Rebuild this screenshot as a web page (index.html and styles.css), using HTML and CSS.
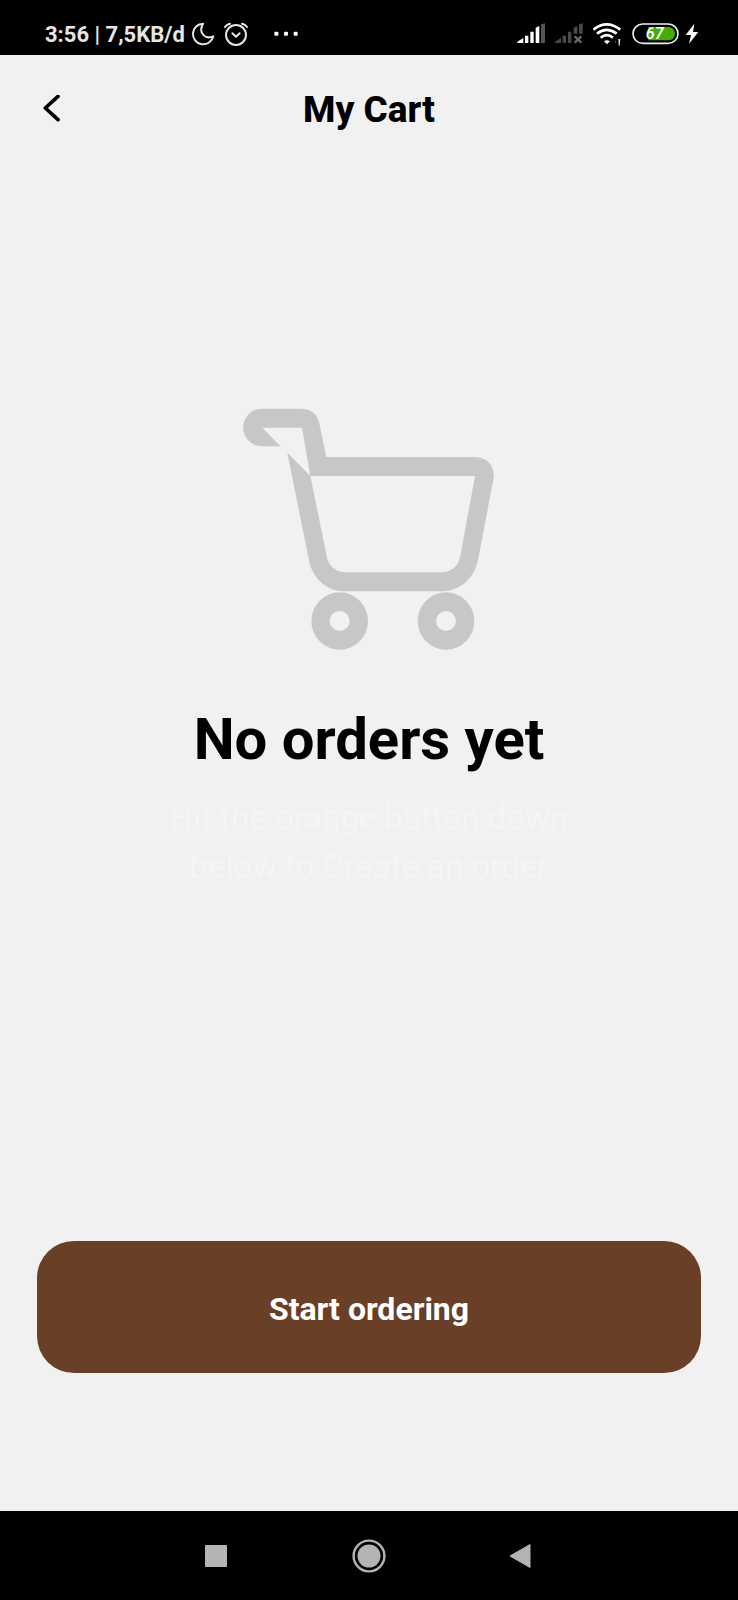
FILE: index.html
```html
<!DOCTYPE html>
<html lang="en">
<head>
  <meta charset="utf-8">
  <meta name="viewport" content="width=device-width, initial-scale=1">
  <title>My Cart</title>
  <link rel="stylesheet" href="styles.css">
</head>
<body>
  <div class="screen">
    <div class="status-bar">
      <div class="status-group status-left">
        <span class="status-text">3:56 | 7,5KB/d</span>
        <svg class="icon" width="24" height="28" viewBox="570 60 72 84" aria-hidden="true">
          <path d="M606 71A31 31 0 1 0 637 109C614 119 590 100 606 71Z" fill="none" stroke="#e6e6e6" stroke-width="6" stroke-linejoin="round"/>
        </svg>
        <svg class="icon alarm" width="26" height="28" viewBox="668 60 78 84" aria-hidden="true">
          <g fill="none" stroke="#e6e6e6" stroke-width="6" stroke-linecap="round" stroke-linejoin="round">
            <circle cx="707" cy="105" r="30"/>
            <path d="M696 100L707 110L718 100M674 81Q679 73 689 71M740 81Q735 73 725 71"/>
          </g>
        </svg>
        <svg class="icon more" width="26" height="28" viewBox="818 60 78 84" aria-hidden="true">
          <g fill="#fff">
            <rect x="822" y="95" width="12" height="12" rx="3"/>
            <rect x="851" y="95" width="12" height="12" rx="3"/>
            <rect x="880" y="95" width="12" height="12" rx="3"/>
          </g>
        </svg>
      </div>
      <div class="status-group status-right">
        <svg class="icon" width="30" height="28" viewBox="50 60 90 84" aria-hidden="true">
          <path d="M51 129V125L69 114V129ZM74 107H84V129H74ZM90 95H100V129H90ZM106 83L117 78V129H106Z" fill="#fff"/>
          <path d="M122 73L134 70V129H122Z" fill="#555"/>
        </svg>
        <svg class="icon" width="30" height="28" viewBox="162 60 90 84" aria-hidden="true">
          <path d="M162 129V125L180 114V129ZM185 107H195V129H185ZM201 95H211V129H201ZM218 83L229 78V101H218ZM234 73L245 70V101H234Z" fill="#484848"/>
          <path d="M221 109L241 128M241 109L221 128" stroke="#686868" stroke-width="7"/>
        </svg>
        <svg class="icon" width="30" height="28" viewBox="279 60 90 84" aria-hidden="true">
          <g fill="none" stroke="#fff" stroke-width="8">
            <path d="M280 89Q320 57 361 89M291 101Q320 78 350 101M302 113Q320 98 339 113"/>
          </g>
          <path d="M312 124Q320 117 330 124L321 133Z" fill="#fff"/>
          <path d="M345 129V119L350 129Z" fill="#555"/>
          <path d="M355 117H361L359 137H356Z" fill="#ddd"/>
        </svg>
        <div class="battery">
          <svg class="icon" width="49" height="28" viewBox="393 60 147 84" role="img" aria-label="Battery 67 percent">
            <rect x="399" y="72" width="135" height="58" rx="29" fill="#000" stroke="#eee" stroke-width="5"/>
            <path d="M445 81H505A20 20 0 0 1 505 121H445Z" fill="#44ad0b"/>
            <text class="battery-level" x="464" y="118" text-anchor="middle">67</text>
          </svg>
          <svg class="icon" width="14" height="28" viewBox="555 60 42 84" aria-hidden="true">
            <path d="M583 71L557 105H573L567 131L595 96H579Z" fill="#fff"/>
          </svg>
        </div>
      </div>
    </div>

    <header class="app-header">
      <button class="back" type="button" aria-label="Back">
        <svg class="icon" width="20" height="30" viewBox="0 0 60 90" aria-hidden="true">
          <path d="M48 4L10 39L48 74" fill="none" stroke="#000" stroke-width="11" stroke-linecap="round" stroke-linejoin="round"/>
        </svg>
      </button>
      <h1 class="title">My Cart</h1>
    </header>

    <main class="content">
      <section class="empty">
        <svg class="icon" width="252" height="242" viewBox="38 35 756 726" aria-hidden="true">
          <g fill="#c7c7c7">
            <path d="M150 150H95A56.500 56.500 0 0 1 95 37H216Q262 40 269 91L288 182H738Q788 188 791 239L743 492C731 546 690 584 638 585H335C284 581 246 544 236 492L171 169L240 239L291 489Q302 524 341 528H638Q677 524 688 489L734 239H240L215 94H96Z"/>
            <path fill-rule="evenodd" d="M328 588A85 86 0 1 1 328 760A85 86 0 1 1 328 588ZM328 644A30 30 0 1 0 328 704A30 30 0 1 0 328 644Z"/>
            <path fill-rule="evenodd" d="M647 588A85 86 0 1 1 647 760A85 86 0 1 1 647 588ZM647 644A30 30 0 1 0 647 704A30 30 0 1 0 647 644Z"/>
          </g>
        </svg>
        <h2 class="empty-title">No orders yet</h2>
        <p class="empty-text">Hit the orange button down<br>below to Create an order</p>
      </section>
      <button class="primary" type="button">Start ordering</button>
    </main>

    <nav class="system-nav" aria-label="System navigation">
      <button class="nav-button" type="button" aria-label="Recent apps">
        <svg class="icon" width="34" height="34" viewBox="0 0 34 34"><rect x="6" y="6" width="22" height="22" rx="1" fill="#b4b4b4"/></svg>
      </button>
      <button class="nav-button" type="button" aria-label="Home">
        <svg class="icon" width="34" height="34" viewBox="0 0 34 34"><circle cx="17" cy="17" r="15.4" fill="none" stroke="#b4b4b4" stroke-width="2.4"/><circle cx="17" cy="17" r="11.5" fill="#b4b4b4"/></svg>
      </button>
      <button class="nav-button" type="button" aria-label="Back">
        <svg class="icon" width="34" height="34" viewBox="0 0 34 34"><path d="M5 17L25 5.500V28.500Z" fill="#b4b4b4" stroke="#b4b4b4" stroke-width="1" stroke-linejoin="round"/></svg>
      </button>
    </nav>
  </div>
</body>
</html>
```
FILE: styles.css
```css
* {
  box-sizing: border-box;
}

body {
  margin: 0;
  background: #f1f1f1;
  color: #000;
  font-family: Roboto, "Liberation Sans", sans-serif;
}

h1,
h2,
p {
  margin: 0;
}

button {
  padding: 0;
  border: 0;
  background: none;
  font: inherit;
  cursor: pointer;
}

.icon {
  display: block;
  flex: none;
}

.screen {
  display: flex;
  flex-direction: column;
  min-height: 100vh;
}

.status-bar {
  display: flex;
  justify-content: space-between;
  padding: 20px 39px 5px 45px;
  background: #000;
  color: #e6e6e6;
}

.status-group {
  display: flex;
  align-items: flex-start;
}

.status-left {
  gap: 6px;
}

.status-right {
  gap: 8px;
}

.status-text {
  font-size: 22px;
  font-weight: 700;
  line-height: 30px;
  white-space: nowrap;
}

.alarm {
  margin-left: 2px;
}

.more {
  margin-left: 18px;
}

.battery {
  display: flex;
  gap: 5px;
}

.battery-level {
  fill: #fff;
  font-size: 48px;
  font-style: italic;
  font-weight: 500;
}

.app-header {
  display: grid;
  grid-template-columns: 1fr auto 1fr;
  align-items: center;
  padding: 32px 42px;
}

.back {
  justify-self: start;
}

.title {
  font-size: 37px;
  font-weight: 800;
  line-height: 46px;
}

.content {
  display: flex;
  flex: 1;
  flex-direction: column;
  padding: 0 37px 138px;
}

.empty {
  display: flex;
  flex: 1;
  flex-direction: column;
  align-items: center;
  justify-content: center;
  padding-bottom: 108px;
  text-align: center;
}

.empty-title {
  margin-top: 54px;
  font-size: 58px;
  line-height: 70px;
}

.empty-text {
  margin-top: 19px;
  color: #f5f5f5;
  font-size: 33px;
  line-height: 49px;
}

.primary {
  padding: 48px 24px 44px;
  border-radius: 37px;
  background: #693f28;
  color: #fff;
  font-size: 32px;
  font-weight: 700;
  line-height: 40px;
}

.system-nav {
  display: flex;
  justify-content: center;
  gap: 119px;
  padding: 28px 0 27px;
  background: #000;
}
```
